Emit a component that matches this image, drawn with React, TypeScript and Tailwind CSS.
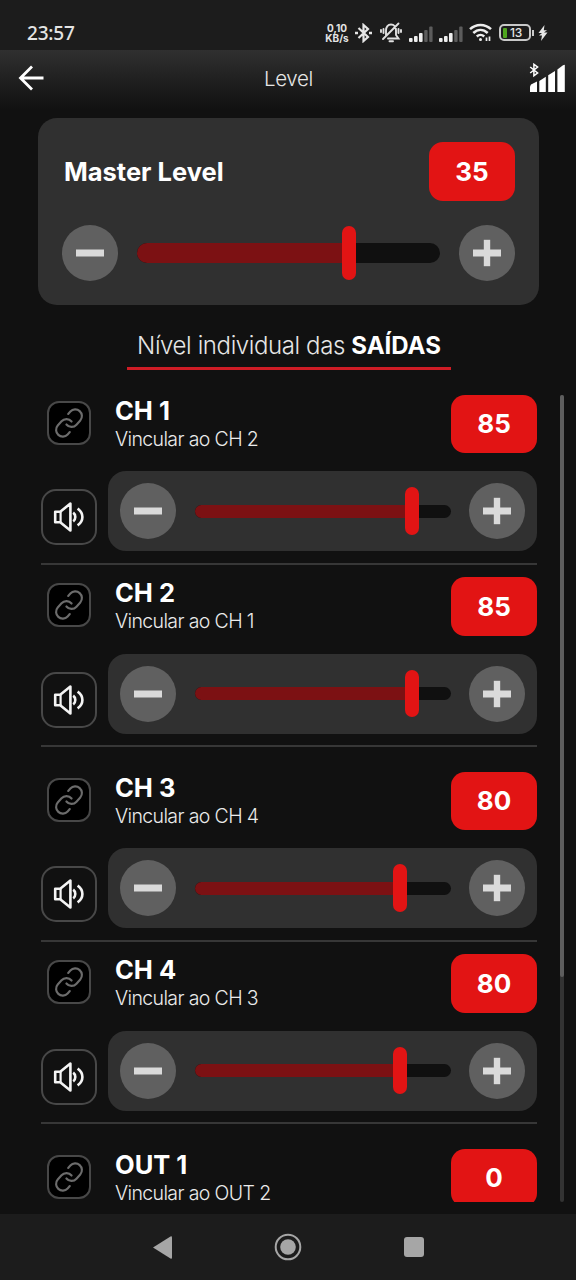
import React from "react";

type Channel = { name: string; link: string; value: number; pct: number; first: boolean };

const channels: Channel[] = [
  { name: "CH 1", link: "Vincular ao CH 2", value: 85, pct: 85, first: true },
  { name: "CH 2", link: "Vincular ao CH 1", value: 85, pct: 85, first: false },
  { name: "CH 3", link: "Vincular ao CH 4", value: 80, pct: 80, first: true },
  { name: "CH 4", link: "Vincular ao CH 3", value: 80, pct: 80, first: false },
  { name: "OUT 1", link: "Vincular ao OUT 2", value: 0, pct: 0, first: true },
];

function RoundButton({ kind }: { kind: "minus" | "plus" }) {
  return (
    <button className="flex size-14 shrink-0 items-center justify-center rounded-full bg-[#606060]">
      <svg width="28" height="28" viewBox="0 0 28 28" fill="#dadada">
        <rect x="0" y="10.5" width="28" height="7" />
        {kind === "plus" && <rect x="10.8" y="0.8" width="6.4" height="26.4" />}
      </svg>
    </button>
  );
}

function Badge({ value }: { value: number }) {
  return (
    <div className="flex h-[58.5px] w-[86px] shrink-0 items-center justify-center rounded-[14px] bg-[#e21414] text-[26px] font-bold text-white">
      {value}
    </div>
  );
}

function Slider({ pct, large = false }: { pct: number; large?: boolean }) {
  const left = large ? 205 : 241 * (pct / 100) + 5.8;
  return (
    <div className={large ? "relative flex h-14 w-[303px] items-center" : "relative flex h-14 w-[256px] items-center"}>
      <div className={large ? "h-5 w-full overflow-hidden rounded-full bg-[#101010]" : "h-[13px] w-full overflow-hidden rounded-full bg-[#101010]"}>
        <div className="h-full bg-[#7c1113]" style={{ width: left + 7 }} />
      </div>
      <div
        className={large ? "absolute top-[1px] h-[54px] w-[14px] rounded-full bg-[#e21414]" : "absolute top-[4px] h-[47.5px] w-[14px] rounded-full bg-[#e21414]"}
        style={{ left }}
      />
    </div>
  );
}

function LinkIcon() {
  return (
    <svg className="shrink-0" width="32" height="32" viewBox="0 0 24 24" fill="none" stroke="#6c6c6c" strokeWidth="1.6" strokeLinecap="round" strokeLinejoin="round">
      <path d="M10 13a5 5 0 0 0 7.54.54l3-3a5 5 0 0 0-7.07-7.07l-1.72 1.71" transform="rotate(-3 12 12)" />
      <path d="M14 11a5 5 0 0 0-7.54-.54l-3 3a5 5 0 0 0 7.07 7.07l1.71-1.71" transform="rotate(-3 12 12)" />
    </svg>
  );
}

function SpeakerIcon() {
  return (
    <svg className="-ml-px" width="32" height="32" viewBox="0 0 32 32" fill="none" stroke="#f4f4f4" strokeWidth="2.6" strokeLinejoin="round">
      <path d="M2.2 10.8H7.2L17.4 2.6V29.4L7.2 21.2H2.2Z" />
      <path d="M7.6 10.8V21.2" strokeWidth="2.2" />
      <path d="M20.2 11.6C23 13.6 23 18.4 20.2 20.4" />
      <path d="M24.6 7.6C31 12 31 20 24.6 24.4" />
    </svg>
  );
}

function ChannelRow({ c }: { c: Channel }) {
  return (
    <section className={c.first ? "h-[182.5px] w-[496px] shrink-0" : "h-[194.5px] w-[496px] shrink-0"}>
      <div className="h-[170px] border-b-2 border-[#373737]">
        <div className="flex h-[59px] items-start">
          <div className="ml-[6px] mt-[6px] flex size-11 items-center justify-center rounded-[12px] border-2 border-[#484848] bg-black">
            <LinkIcon />
          </div>
          <div className="ml-[24px] flex-1 whitespace-nowrap">
            <div className="mt-[1px] text-[25.5px] leading-[29px] font-bold tracking-[0px] text-white">{c.name}</div>
            <div className="mt-[1px] text-[19.5px] leading-[26px] font-light tracking-[-0.62px] text-[#ebebeb]">{c.link}</div>
          </div>
          <Badge value={c.value} />
        </div>
        <div className="mt-[17.5px] flex items-start">
          <div className="mt-[18px] flex size-14 items-center justify-center rounded-[15px] border-2 border-[#484848]">
            <SpeakerIcon />
          </div>
          <div className="ml-[11px] flex h-20 w-[429px] items-center justify-between rounded-[18px] bg-[#303030] px-3">
            <RoundButton kind="minus" />
            <Slider pct={c.pct} />
            <RoundButton kind="plus" />
          </div>
        </div>
      </div>
    </section>
  );
}

function Bluetooth() {
  return (
    <svg width="19" height="20" viewBox="0 0 19 20" fill="none" stroke="#e6e6e6" strokeWidth="2.2">
      <path d="M4.5 5L14 14L9.5 18V2L14 6L4.5 15" />
      <path d="M1 10H4M15 10H18" strokeWidth="2.6" />
    </svg>
  );
}

function Signal() {
  return (
    <svg width="25" height="16" viewBox="0 0 25 16">
      <g fill="#eeeeee">
        <rect x="0" y="12" width="3.6" height="4" rx="1" />
        <rect x="5" y="10" width="3.6" height="6" rx="1" />
        <rect x="10" y="7" width="3.6" height="9" rx="1" />
      </g>
      <g fill="#5c5c5c">
        <rect x="15.2" y="4" width="3.4" height="12" rx="1" />
        <rect x="20.2" y="0.5" width="3.4" height="15.5" rx="1" />
      </g>
    </svg>
  );
}

function StatusBar() {
  return (
    <div className="flex h-[50px] shrink-0 items-start bg-[#1c1c1c] pl-[27px] text-[#e4e4e4]">
      <div className="w-[297px] pt-[21px] font-['Noto_Sans',sans-serif] text-[19px] leading-6 font-medium tracking-[-0.2px]">23:57</div>
      <div className="flex items-center pt-[22px]">
        <div className="w-[26px] text-center text-[10px] leading-none font-bold whitespace-nowrap">
          <div className="h-[10px] leading-[10px]">0,10</div>
          <div className="h-[10px] leading-[10px]">KB/s</div>
        </div>
        <div className="ml-[4px]"><Bluetooth /></div>
        <svg className="ml-[7px]" width="22" height="21" viewBox="0 0 22 21" fill="none" stroke="#e0e0e0" strokeWidth="1.9" strokeLinecap="round">
          <path d="M6 14V8.5C6 5 8 2.5 11 2.5C14 2.5 16 5 16 8.5V13L18.5 16.5H8M9.5 19.3H13M18.5 1.5L3 17M3.5 7V11M1 8V10M18.5 7V11M21 8V10" />
        </svg>
        <div className="ml-[7px] pt-[2px]"><Signal /></div>
        <div className="ml-[5px] pt-[2px]"><Signal /></div>
        <svg className="ml-[5px]" width="24" height="19" viewBox="0 0 24 19" fill="none" stroke="#eeeeee" strokeWidth="2.5">
          <path d="M1 6.2C7 0.5 16 0.5 22 6.2M4.3 10C8.7 5.9 14.3 5.9 18.7 10M7.8 13.5C10 11.4 13 11.4 15.2 13.5" />
          <circle cx="11.5" cy="16.5" r="1.5" fill="#eeeeee" stroke="none" />
          <path d="M17.5 14.5V18M20.5 13.5V18" strokeWidth="1.7" />
        </svg>
        <div className="ml-[6px] flex h-[17px] w-[32px] items-center rounded-[5px] border-2 border-[#c9c9c9] pl-[2px]">
          <div className="h-[10px] w-[4px] rounded-[1px] bg-[#4fa51e]" />
          <div className="ml-[3px] text-[12px] leading-3 font-medium tracking-[-0.3px]">13</div>
        </div>
        <div className="ml-[1px] h-[6px] w-[2px] bg-[#c9c9c9]" />
        <svg className="ml-[4px]" width="10" height="16" viewBox="0 0 10 16" fill="#e6e6e6">
          <path d="M6.5 0L0.5 8H4L1 10.5H4L3 16L9.5 7.5H6L9 5.2H5.8Z" />
        </svg>
      </div>
    </div>
  );
}

export default function App() {
  return (
    <div className="flex h-[1280px] w-[576px] flex-col overflow-hidden bg-[#111111] font-['Inter',sans-serif]">
      <StatusBar />
      <header className="flex h-[60px] shrink-0 items-start bg-linear-to-b from-[#303030] to-[#111111]">
        <svg className="mt-[15px] ml-[18px]" width="27" height="26" viewBox="0 0 27 26" fill="none" stroke="#ffffff" strokeWidth="2.8">
          <path d="M14 1.5L2.5 13L14 24.5M2 13H25.5" />
        </svg>
        <h1 className="mt-[15px] flex-1 pl-[3px] text-center text-[20.5px] leading-7 font-light tracking-[-0.3px] text-[#e6e6e6]">Level</h1>
        <svg className="mt-[13px] mr-[11px]" width="36" height="30" viewBox="0 0 36 30">
          <g fill="#ffffff">
            <path d="M1 23.5L2 21.5L8 18.5V29H1Z" />
            <path d="M10.3 18L16.8 13.7V29H10.3Z" />
            <path d="M19.2 12.3L26 8V29H19.2Z" />
            <path d="M28.4 6.5L34 2.3L35.8 1.8V29H28.4Z" />
          </g>
          <path d="M1.2 4L8.6 10L4.9 12.7V1.3L8.6 4L1.2 10" fill="none" stroke="#ffffff" strokeWidth="1.5" />
        </svg>
      </header>
      <main className="flex min-h-0 flex-1 flex-col pt-2">
        <section className="ml-[38px] h-[187px] w-[501px] shrink-0 rounded-[19px] bg-[#303030] px-6 pt-6">
          <div className="flex items-center justify-between pl-[2px]">
            <h2 className="pt-[2px] text-[25.5px] font-bold text-white">Master Level</h2>
            <Badge value={35} />
          </div>
          <div className="mt-[24.5px] flex items-center justify-between">
            <RoundButton kind="minus" />
            <Slider pct={70} large />
            <RoundButton kind="plus" />
          </div>
        </section>
        <div className="ml-[127px] mt-[23px] flex h-[42px] w-[324px] shrink-0 items-start justify-center border-b-[3px] border-[#cf1c25] text-[24px] leading-9 font-light tracking-[-0.4px] whitespace-nowrap text-[#e6e6e6]">
          Nível individual das&nbsp;<b className="font-bold tracking-[0px] text-white">SAÍDAS</b>
        </div>
        <div className="mt-[24.5px] flex h-[807.5px] shrink-0">
          <div className="ml-[41px] flex w-[497px] flex-col overflow-hidden">
            {channels.map((c) => <ChannelRow key={c.name} c={c} />)}
          </div>
          <div className="ml-[22px] h-full w-1 rounded-full bg-[#333333]">
            <div className="h-[582px] rounded-full bg-[#5e5e5e]" />
          </div>
        </div>
      </main>
      <nav className="flex h-[66px] shrink-0 items-center bg-[#1c1c1c]">
        <svg className="ml-[152px]" width="21" height="25" viewBox="0 0 21 25" fill="#a6a6a6">
          <path d="M1 12.5L18.5 1.5Q20 0.8 20 2.5V22.5Q20 24.2 18.5 23.5Z" />
        </svg>
        <svg className="ml-[101px]" width="28" height="28" viewBox="0 0 28 28">
          <circle cx="14" cy="14" r="12.3" fill="none" stroke="#a6a6a6" strokeWidth="2" />
          <circle cx="14" cy="14" r="7.8" fill="#a6a6a6" />
        </svg>
        <div className="ml-[102px] size-5 rounded-[3px] bg-[#a6a6a6]" />
      </nav>
    </div>
  );
}
